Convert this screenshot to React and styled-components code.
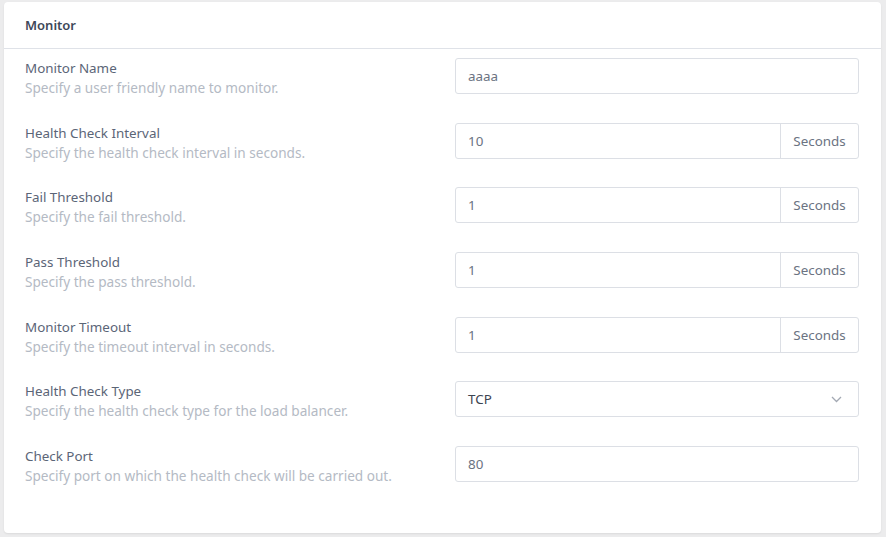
import styled, { createGlobalStyle } from "styled-components";

const GlobalStyle = createGlobalStyle`
	body {
		margin: 0;
		background: #ececed;
		font-family: "Noto Sans", Roboto, sans-serif;
	}
`;

const Page = styled.div`
	padding: 2px 5px 5px 4px;
`;

const Card = styled.section`
	background: #ffffff;
	border-radius: 4px;
	box-shadow: 0 1px 2px rgba(0, 0, 0, 0.08);
`;

const CardHeader = styled.header`
	display: flex;
	align-items: center;
	height: 46px;
	padding: 0 21px 1px;
	box-sizing: border-box;
	height: 47px;
	border-bottom: 1px solid #dfe2e8;
	font-size: 13px;
	font-weight: 600;
	color: #3e4859;
`;

const CardBody = styled.div`
	display: flex;
	flex-direction: column;
	gap: 28.7px;
	padding: 9px 22px 51px 21px;
`;

const Row = styled.div`
	display: grid;
	grid-template-columns: 1fr 404px;
	align-items: start;
	height: 36px;
`;

const LabelBlock = styled.div`
	display: flex;
	flex-direction: column;
	gap: 2px;
	padding-top: 2px;
`;

const Label = styled.div`
	font-size: 13.4px;
	line-height: 17px;
	color: #5b6577;
`;

const Hint = styled.div`
	font-size: 13.6px;
	line-height: 18px;
	color: #b4bac4;
`;

const Field = styled.div`
	display: flex;
	height: 36px;
	border: 1px solid #dcdfe5;
	border-radius: 3px;
	box-sizing: border-box;
	overflow: hidden;
`;

const Value = styled.div`
	flex: 1;
	display: flex;
	align-items: center;
	padding: 0 12px;
	font-size: 13.4px;
	color: ${(p) => (p.$dark ? "#3d4451" : "#6b7382")};
`;

const Addon = styled.div`
	display: flex;
	align-items: center;
	justify-content: center;
	width: 77px;
	border-left: 1px solid #dcdfe5;
	font-size: 13.4px;
	color: #6b7382;
`;

const Chevron = styled.svg`
	align-self: center;
	margin-right: 16px;
	width: 11px;
	height: 7px;
	fill: none;
	stroke: #a3a9b3;
	stroke-width: 1.3;
`;

const rows = [
	{ label: "Monitor Name", hint: "Specify a user friendly name to monitor.", value: "aaaa" },
	{ label: "Health Check Interval", hint: "Specify the health check interval in seconds.", value: "10", unit: "Seconds" },
	{ label: "Fail Threshold", hint: "Specify the fail threshold.", value: "1", unit: "Seconds" },
	{ label: "Pass Threshold", hint: "Specify the pass threshold.", value: "1", unit: "Seconds" },
	{ label: "Monitor Timeout", hint: "Specify the timeout interval in seconds.", value: "1", unit: "Seconds" },
	{ label: "Health Check Type", hint: "Specify the health check type for the load balancer.", value: "TCP", select: true },
	{ label: "Check Port", hint: "Specify port on which the health check will be carried out.", value: "80" },
];

const App = () => {
	return (
		<>
			<GlobalStyle />
			<Page>
				<Card>
					<CardHeader>Monitor</CardHeader>
					<CardBody>
						{rows.map((r) => (
							<Row key={r.label}>
								<LabelBlock>
									<Label>{r.label}</Label>
									<Hint>{r.hint}</Hint>
								</LabelBlock>
								<Field>
									<Value $dark={r.select}>{r.value}</Value>
									{r.unit && <Addon>{r.unit}</Addon>}
									{r.select && (
										<Chevron viewBox="0 0 11 7">
											<path d="M1 1l4.5 4.5L10 1" />
										</Chevron>
									)}
								</Field>
							</Row>
						))}
					</CardBody>
				</Card>
			</Page>
		</>
	);
};

export default App;
